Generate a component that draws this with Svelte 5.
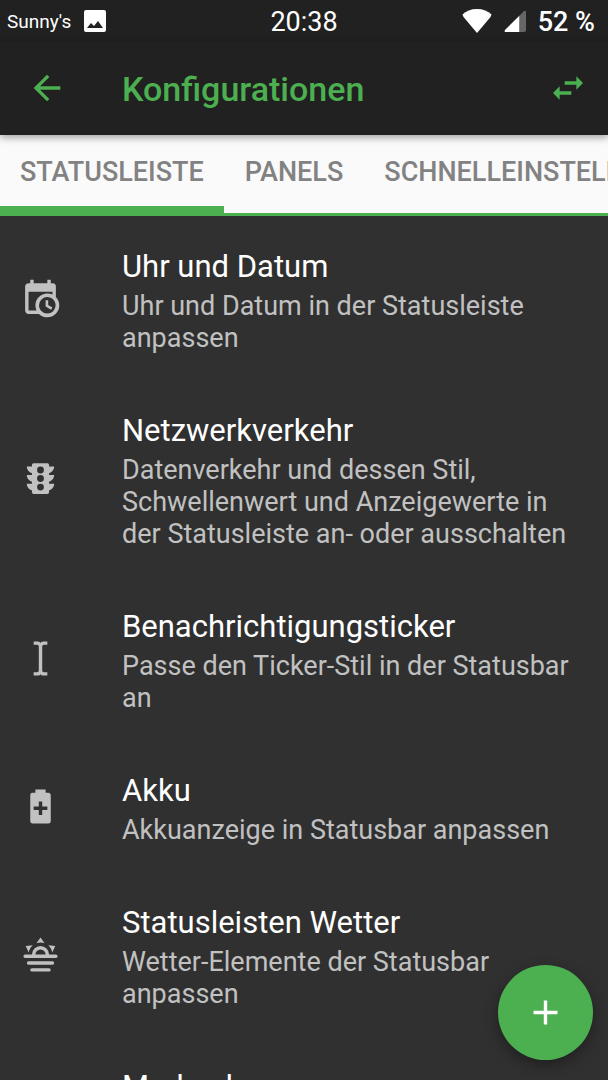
<script>
  const tabs = ['Statusleiste', 'Panels', 'Schnelleinstellungen'];
  let active = $state(0);

  const items = [
    {
      title: 'Uhr und Datum',
      summary: 'Uhr und Datum in der Statusleiste anpassen',
      icon: 'M15,13H16.5V15.82L18.94,17.23L18.19,18.53L15,16.69V13M19,8H5V19H9.67C9.24,18.09 9,17.07 9,16A7,7 0 0,1 16,9C17.07,9 18.09,9.24 19,9.67V8M5,21C3.89,21 3,20.1 3,19V5C3,3.89 3.89,3 5,3H6V1H8V3H16V1H18V3H19A2,2 0 0,1 21,5V11.1C22.24,12.36 23,14.09 23,16A7,7 0 0,1 16,23C14.09,23 12.36,22.24 11.1,21H5M16,11.15A4.85,4.85 0 0,0 11.15,16C11.15,18.68 13.32,20.85 16,20.85A4.85,4.85 0 0,0 20.85,16C20.85,13.32 18.68,11.15 16,11.15Z'
    },
    {
      title: 'Netzwerkverkehr',
      summary: 'Datenverkehr und dessen Stil, Schwellenwert und Anzeigewerte in der Statusleiste an- oder ausschalten',
      icon: 'M20,10H17V8.86C18.72,8.41 20,6.86 20,5H17V4A1,1 0 0,0 16,3H8A1,1 0 0,0 7,4V5H4C4,6.86 5.28,8.41 7,8.86V10H4C4,11.86 5.28,13.41 7,13.86V15H4C4,16.86 5.28,18.41 7,18.86V20A1,1 0 0,0 8,21H16A1,1 0 0,0 17,20V18.86C18.72,18.41 20,16.86 20,15H17V13.86C18.72,13.41 20,11.86 20,10M12,19A2,2 0 1,1 12,15A2,2 0 1,1 12,19M12,14A2,2 0 1,1 12,10A2,2 0 1,1 12,14M12,9A2,2 0 1,1 12,5A2,2 0 1,1 12,9Z'
    },
    {
      title: 'Benachrichtigungsticker',
      summary: 'Passe den Ticker-Stil in der Statusbar an',
      icon: 'M13,19A1,1 0 0,0 14,20H16V22H13.5C12.95,22 12,21.55 12,21C12,21.55 11.05,22 10.5,22H8V20H10A1,1 0 0,0 11,19V5A1,1 0 0,0 10,4H8V2H10.5C11.05,2 12,2.45 12,3C12,2.45 12.95,2 13.5,2H16V4H14A1,1 0 0,0 13,5V19Z'
    },
    {
      title: 'Akku',
      summary: 'Akkuanzeige in Statusbar anpassen',
      icon: 'M16.67,4H15V2H9V4H7.33A1.33,1.33 0 0,0 6,5.33V20.67C6,21.4 6.6,22 7.33,22H16.67A1.33,1.33 0 0,0 18,20.67V5.33C18,4.6 17.4,4 16.67,4M16,14H13V17H11V14H8V12H11V9H13V12H16V14Z'
    },
    {
      title: 'Statusleisten Wetter',
      summary: 'Wetter-Elemente der Statusbar anpassen',
      icon: 'M12,2L14.39,5.42C13.65,5.15 12.84,5 12,5C11.16,5 10.35,5.15 9.61,5.42L12,2M3.34,7L7.5,6.65C6.9,7.16 6.36,7.78 5.94,8.5C5.5,9.24 5.25,10 5.11,10.79L3.34,7M20.65,7L18.88,10.79C18.74,10 18.47,9.23 18.05,8.5C17.63,7.78 17.1,7.15 16.5,6.64L20.65,7M3,12H7A5,5 0 0,1 17,12H21A1,1 0 0,1 21,14H3A1,1 0 0,1 3,12M15,12A3,3 0 0,0 9,12H15M5,16H19A1,1 0 0,1 19,18H5A1,1 0 0,1 5,16M7,20H17A1,1 0 0,1 17,22H7A1,1 0 0,1 7,20Z'
    },
    {
      title: 'Markenlogo',
      summary: 'Logo in der Statusleiste anpassen',
      icon: 'M12,2A10,10 0 1,0 12,22A10,10 0 1,0 12,2Z'
    }
  ];
</script>

<div class="screen">
  <div class="status-bar">
    <div class="status-left">
      <span class="carrier">Sunny's</span>
      <svg width="22" height="22" viewBox="0 0 22 22">
        <path fill="#fff" fill-rule="evenodd" d="M2 0H20A2 2 0 0 1 22 2V20A2 2 0 0 1 20 22H2A2 2 0 0 1 0 20V2A2 2 0 0 1 2 0ZM3 18H19L14 11L10 16L7 13Z" />
      </svg>
    </div>
    <span class="clock">20:38</span>
    <div class="status-right">
      <svg width="30" height="24" viewBox="0 0 30 24">
        <path fill="#fff" d="M0.5 5.5C4 2 9 0 15 0S26 2 29.5 5.5L28.5 8L15 24L1.5 8Z" />
      </svg>
      <svg width="22" height="22" viewBox="0 0 23 23">
        <path fill="#666" d="M16 6L21 1Q23 0 23 2V21Q23 23 21 23H16Z" />
        <path fill="#fff" d="M16 6V23H2Q0 23 1 21Z" />
      </svg>
      <span class="battery">52 %</span>
    </div>
  </div>

  <header class="app-bar">
    <button class="icon-button" aria-label="Zurück">
      <svg width="40" height="40" viewBox="0 0 24 24">
        <path d="M20 11H7.83l5.59-5.59L12 4l-8 8 8 8 1.41-1.41L7.83 13H20v-2z" />
      </svg>
    </button>
    <h1>Konfigurationen</h1>
    <button class="icon-button" aria-label="Wechseln">
      <svg width="40" height="40" viewBox="0 0 24 24">
        <path d="M6.99 11L3 15l3.99 4v-3H14v-2H6.99v-3zM21 9l-3.99-4v3H10v2h7.01v3L21 9z" />
      </svg>
    </button>
  </header>

  <nav class="tabs">
    {#each tabs as tab, i}
      <button class="tab" class:active={active === i} onclick={() => (active = i)}>{tab}</button>
    {/each}
  </nav>

  <main class="list">
    {#each items as item}
      <button class="row">
        <svg width="41" height="41" viewBox="0 0 24 24">
          <path fill-rule="evenodd" d={item.icon} />
        </svg>
        <span class="text">
          <span class="title">{item.title}</span>
          <span class="summary">{item.summary}</span>
        </span>
      </button>
    {/each}
  </main>

  <button class="fab" aria-label="Hinzufügen">
    <svg width="41" height="41" viewBox="0 0 24 24">
      <path d="M19 13h-6v6h-2v-6H5v-2h6V5h2v6h6v2z" />
    </svg>
  </button>
</div>

<style>
  :global(body) {
    margin: 0;
    background: #303030;
  }

  .screen {
    display: flex;
    flex-direction: column;
    height: 100vh;
    overflow: hidden;
    background: #303030;
    color: #fff;
    font-family: Roboto, 'Liberation Sans', sans-serif;
  }

  button {
    margin: 0;
    padding: 0;
    border: 0;
    background: none;
    color: inherit;
    font: inherit;
    cursor: pointer;
  }

  svg {
    display: block;
    flex-shrink: 0;
  }

  .status-bar {
    display: grid;
    grid-template-columns: 1fr auto 1fr;
    align-items: center;
    flex-shrink: 0;
    height: 42px;
    padding: 0 7px;
    background: #212121;
  }

  .status-left,
  .status-right {
    display: flex;
    align-items: center;
  }

  .status-left {
    gap: 13px;
  }

  .status-right {
    justify-content: flex-end;
    gap: 12px;
    padding-right: 6px;
  }

  .carrier {
    font-size: 19px;
  }

  .clock,
  .battery {
    padding-top: 2px;
    font-size: 27px;
    line-height: 32px;
  }

  .battery {
    font-weight: 500;
  }

  .app-bar {
    display: flex;
    align-items: center;
    flex-shrink: 0;
    box-sizing: border-box;
    height: 93px;
    padding: 0 20px 2px 27px;
    background: #212121;
    color: #4caf50;
    box-shadow: 0 2px 8px rgba(0, 0, 0, 0.4);
    z-index: 1;
  }

  .icon-button svg,
  .fab svg {
    fill: currentColor;
  }

  h1 {
    flex: 1;
    margin: 0 0 0 55px;
    padding-top: 2px;
    font-size: 34px;
    font-weight: 500;
    line-height: 40px;
  }

  .tabs {
    display: flex;
    flex-shrink: 0;
    gap: 1px;
    height: 81px;
    overflow: hidden;
    background: #fafafa;
    box-shadow: inset 0 -3px #4caf50;
  }

  .tab {
    flex-shrink: 0;
    padding: 2px 20px 0;
    border-bottom: 10px solid transparent;
    color: #828282;
    font-size: 27px;
    font-weight: 500;
    text-transform: uppercase;
  }

  .tab.active {
    border-bottom-color: #4caf50;
  }

  .list {
    flex: 1;
    min-height: 0;
    overflow-y: auto;
    scrollbar-width: none;
  }

  /* the text block sits a little below the icon's centre line */
  .row {
    display: flex;
    align-items: center;
    gap: 61px;
    width: 100%;
    padding: 26px 27px 26px 20px;
    text-align: left;
  }

  .row svg {
    fill: #c1c1c1;
  }

  .text {
    display: flex;
    flex-direction: column;
    gap: 4px;
    padding-top: 6px;
  }

  .title {
    font-size: 31px;
    line-height: 38px;
  }

  .summary {
    color: #c1c1c1;
    font-size: 27px;
    line-height: 32px;
  }

  .fab {
    position: fixed;
    right: 15px;
    bottom: 20px;
    display: flex;
    align-items: center;
    justify-content: center;
    width: 95px;
    height: 95px;
    border-radius: 50%;
    background: #4caf50;
    box-shadow: 0 5px 14px rgba(0, 0, 0, 0.35);
  }
</style>
